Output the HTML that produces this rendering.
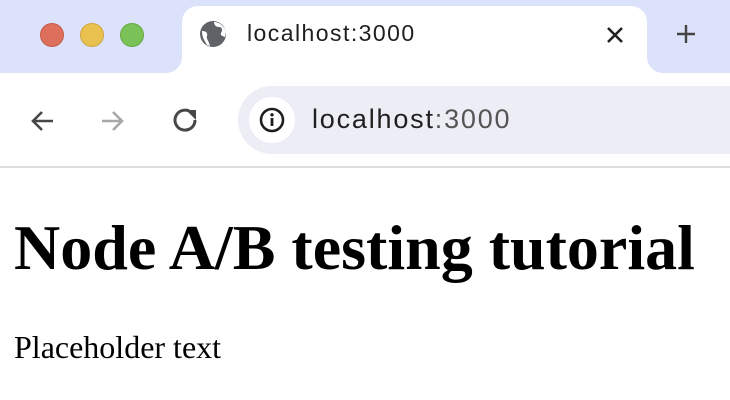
<!DOCTYPE html>
<html><head><style>
*{margin:0;padding:0;box-sizing:border-box}
html,body{width:730px;height:400px;overflow:hidden;background:#fff}
.top{position:absolute;left:0;top:0;width:730px;height:73px;background:#dbe2f9}
.dot{position:absolute;top:23px;width:24px;height:24px;border-radius:50%}
.tab{position:absolute;left:182px;top:6px;width:465px;height:70px;background:#fff;border-radius:16px 16px 0 0}
.ic{position:absolute;width:16px;height:16px;top:57px;background:#fff}
.ic::after{content:"";position:absolute;inset:0;background:#dbe2f9}
.icl{left:166px}.icl::after{border-bottom-right-radius:16px}
.icr{left:647px}.icr::after{border-bottom-left-radius:16px}
.tabtxt{position:absolute;left:247px;top:20px;font:23px "Liberation Sans",sans-serif;letter-spacing:1.45px;color:#1f1f1f}
.tool{position:absolute;left:0;top:73px;width:730px;height:93px;background:#fff;border-top-left-radius:16px}
.line{position:absolute;left:0;top:166px;width:730px;height:2px;background:#dcdcdc}
.omni{position:absolute;left:238px;top:86px;width:540px;height:68px;background:#ecedf5;border-radius:34px}
.info{position:absolute;left:249px;top:97px;width:46px;height:46px;border-radius:50%;background:#fff}
.url{position:absolute;left:312px;top:104px;font:27px "Liberation Sans",sans-serif;letter-spacing:1.8px;color:#1f1f1f}
.url span{color:#555}
.content{position:absolute;left:0;top:168px;width:730px;padding:0 14px;font-family:"Liberation Serif",serif;color:#000}
h1{font-size:64px;font-weight:bold;margin-top:43px;line-height:74px}
p{font-size:32px;margin-top:43px;line-height:38px}
</style></head><body>
<div class="top"></div>
<div class="dot" style="left:40px;background:#de6f5d;border:1px solid #c75a48"></div>
<div class="dot" style="left:80px;background:#e9c14f;border:1px solid #cfa63c"></div>
<div class="dot" style="left:120px;background:#7ac158;border:1px solid #63a845"></div>
<div class="ic icl"></div><div class="ic icr"></div>
<div class="tab"></div>
<svg style="position:absolute;left:199px;top:20px" width="28" height="28" viewBox="0 0 28 28"><circle cx="14" cy="14" r="13" fill="#5f6368"/><path d="M3 11C7 11 9 13 8 16C7 19 10 21 11 26L8 25C6 21 3 18 3 11Z" fill="#fff"/><path d="M15 2C15 5 17 7 20 7C23 7 24 10 22 13C21 15 23 16 26 17L27 12C26 7 21 2 15 2Z" fill="#fff"/></svg>
<div class="tabtxt">localhost:3000</div>
<svg style="position:absolute;left:605px;top:25px" width="20" height="20" viewBox="0 0 20 20"><path d="M3 3L17 17M17 3L3 17" stroke="#222" stroke-width="2.6"/></svg>
<svg style="position:absolute;left:675px;top:23px" width="22" height="22" viewBox="0 0 22 22"><path d="M11 2V20M2 11H20" stroke="#444" stroke-width="2.4"/></svg>
<div class="tool"></div>
<div class="line"></div>
<svg style="position:absolute;left:28px;top:107px" width="28" height="28" viewBox="0 0 28 28"><path d="M25 14H5M14 5L5 14L14 23" fill="none" stroke="#474747" stroke-width="2.6"/></svg>
<svg style="position:absolute;left:99px;top:107px" width="28" height="28" viewBox="0 0 28 28"><path d="M3 14H23M14 5L23 14L14 23" fill="none" stroke="#a8a8a8" stroke-width="2.6"/></svg>
<svg style="position:absolute;left:171px;top:106px" width="30" height="30" viewBox="0 0 30 30"><path d="M24 14A10 10 0 1 1 20.5 6.5" fill="none" stroke="#474747" stroke-width="3"/><path d="M15 4H25V14Z" fill="#474747"/></svg>
<div class="omni"></div>
<div class="info"></div>
<svg style="position:absolute;left:259px;top:107px" width="26" height="26" viewBox="0 0 26 26"><circle cx="13" cy="13" r="11" fill="none" stroke="#1f1f1f" stroke-width="2.6"/><rect x="11.6" y="11" width="2.8" height="8" fill="#1f1f1f"/><circle cx="13" cy="7.8" r="1.7" fill="#1f1f1f"/></svg>
<div class="url">localhost<span>:3000</span></div>
<div class="content"><h1>Node A/B testing tutorial</h1><p>Placeholder text</p></div>
</body></html>
